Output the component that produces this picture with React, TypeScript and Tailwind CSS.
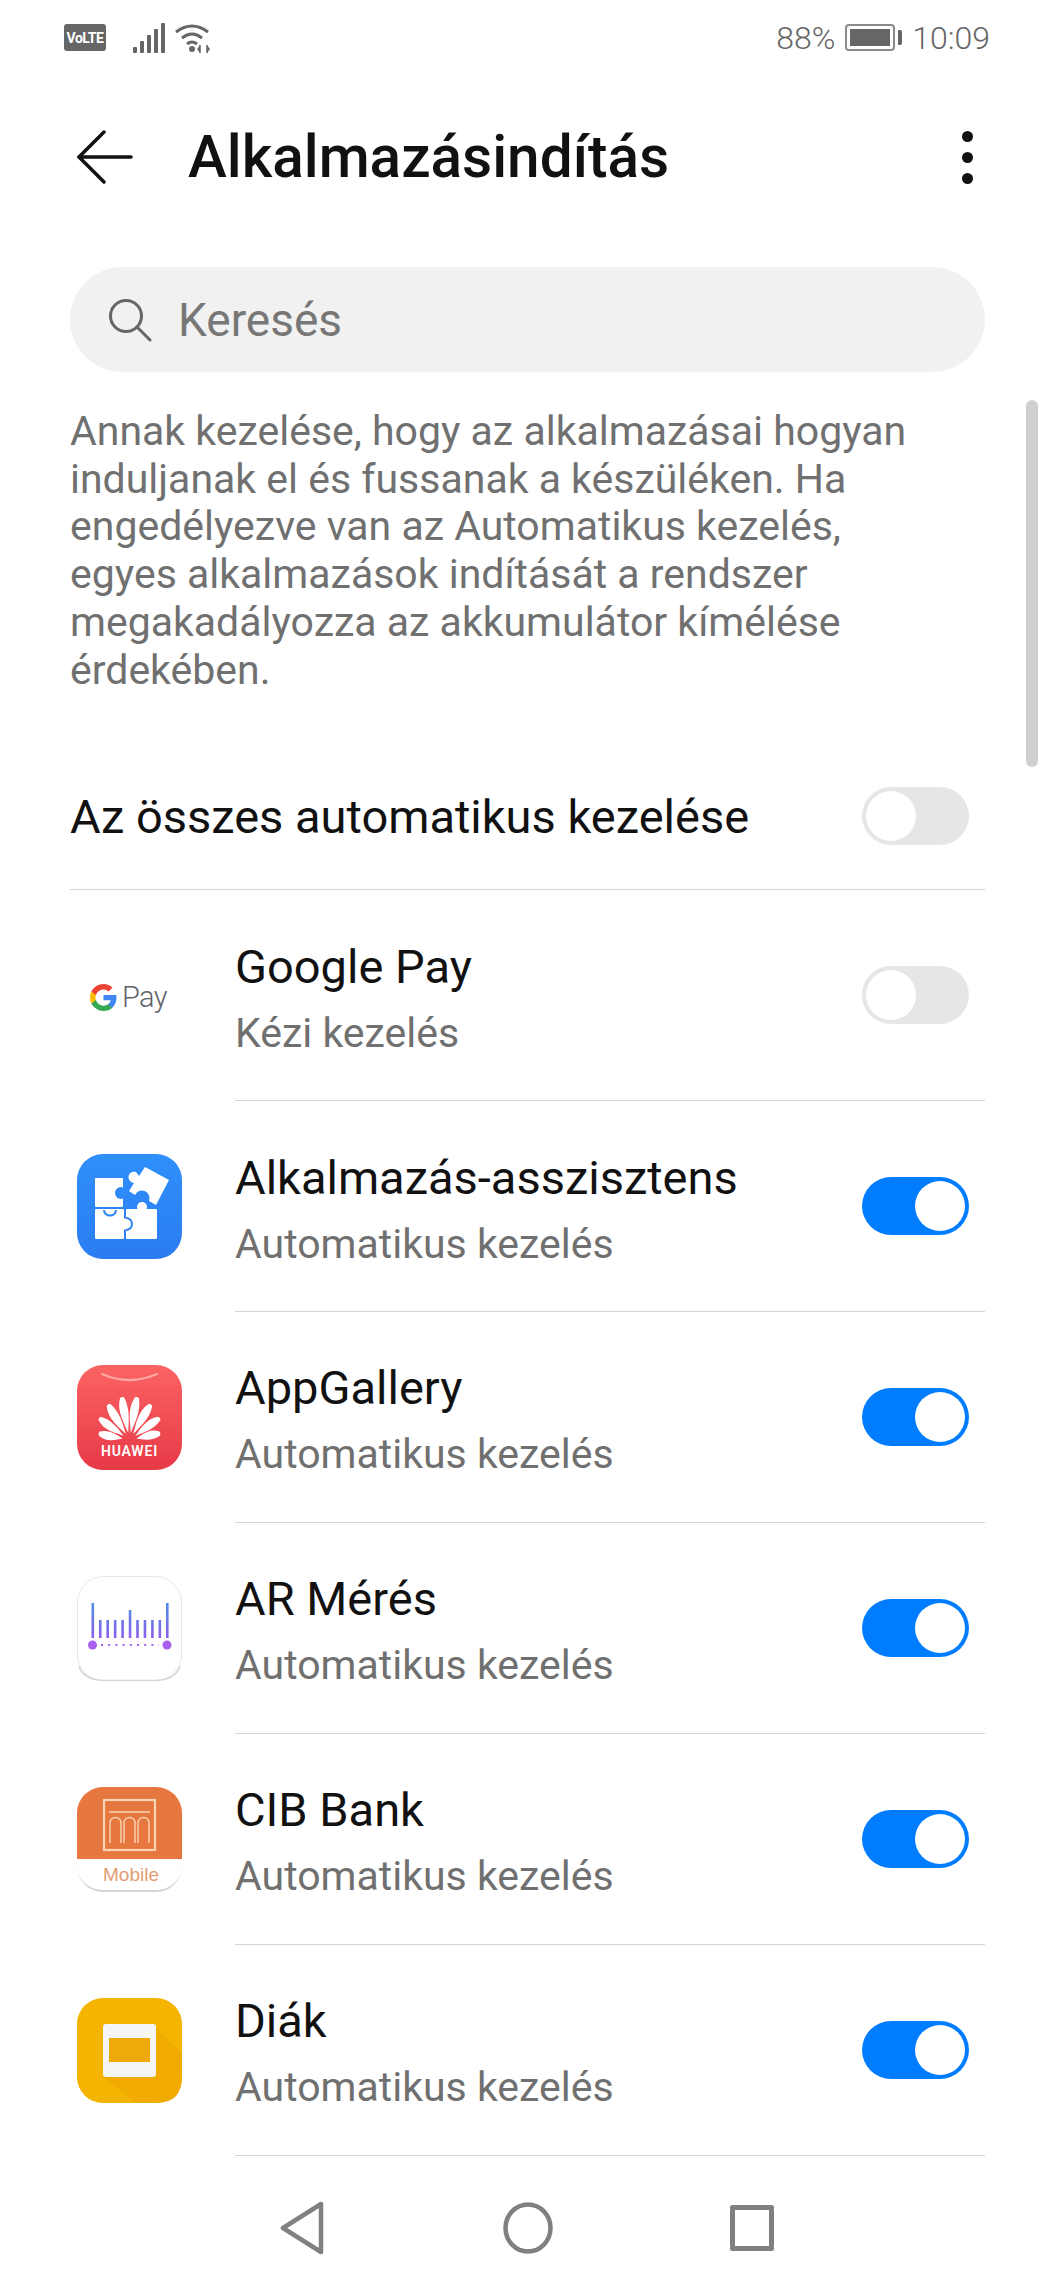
import type { ReactNode } from 'react';

function Toggle({ on }: { on: boolean }) {
  return (
    <div
      className={`flex h-[58px] w-[107px] flex-none items-center rounded-full p-[4px] ${
        on ? 'justify-end bg-[#007dff]' : 'justify-start bg-[#e6e6e6]'
      }`}
    >
      <div className="h-[50px] w-[50px] rounded-full bg-white" />
    </div>
  );
}

function GPayIcon() {
  return (
    <div className="flex items-center gap-[5px] pl-[13px] pt-[3px]">
      <svg width="27" height="27" viewBox="1 1 22 22" className="flex-none">
        <path fill="#4285F4" d="M22.56 12.25c0-.78-.07-1.53-.2-2.25H12v4.26h5.92c-.26 1.37-1.04 2.53-2.21 3.31v2.77h3.57c2.08-1.92 3.28-4.74 3.28-8.09z" />
        <path fill="#34A853" d="M12 23c2.97 0 5.46-.98 7.28-2.66l-3.57-2.77c-.98.66-2.23 1.06-3.71 1.06-2.86 0-5.29-1.93-6.16-4.53H2.18v2.84C3.99 20.53 7.7 23 12 23z" />
        <path fill="#FBBC05" d="M5.84 14.09c-.22-.66-.35-1.36-.35-2.09s.13-1.43.35-2.09V7.07H2.18C1.43 8.55 1 10.22 1 12s.43 3.45 1.18 4.93l2.85-2.22.81-.62z" />
        <path fill="#EA4335" d="M12 5.38c1.62 0 3.06.56 4.21 1.64l3.15-3.15C17.45 2.09 14.97 1 12 1 7.7 1 3.99 3.47 2.18 7.07l3.66 2.84c.87-2.6 3.3-4.53 6.16-4.53z" />
      </svg>
      <span className="text-[29px] leading-none font-light tracking-[-0.6px] text-[#5f6368]">Pay</span>
    </div>
  );
}

function PuzzleIcon() {
  return (
    <svg width="105" height="105" viewBox="0 0 105 105">
      <defs>
        <linearGradient id="puzzle" x1="0" y1="0" x2="0" y2="1">
          <stop offset="0" stopColor="#2f90fb" />
          <stop offset="1" stopColor="#2b7cf0" />
        </linearGradient>
      </defs>
      <rect width="105" height="105" rx="26" fill="url(#puzzle)" />
      <g fill="#fff">
        <rect x="18" y="24" width="28" height="29" rx="1" />
        <rect x="18" y="55" width="29" height="30" rx="1" />
        <rect x="49" y="55" width="31" height="30" rx="1" />
        <circle cx="65" cy="53" r="5" />
        <circle cx="50" cy="70" r="6" />
        <path d="M68 13 L92 26 L79 51 L72 47 C75 38 63 32 58 41 L52 37 L57 29 C49 28 50 16 59 18 L62 22 Z" />
      </g>
      <circle cx="44" cy="39" r="6" fill="#2e8af8" />
      <path d="M27 56 a6 5.5 0 0 0 12 0" fill="none" stroke="#2e84f5" strokeWidth="2" />
      <path d="M49 64 a6 6 0 0 1 0 12" fill="none" stroke="#2e84f5" strokeWidth="2" />
    </svg>
  );
}

function HuaweiIcon() {
  const petals = [
    { a: -78, l: 31 },
    { a: -54, l: 37 },
    { a: -31, l: 41 },
    { a: -10, l: 43 },
    { a: 10, l: 43 },
    { a: 31, l: 41 },
    { a: 54, l: 37 },
    { a: 78, l: 31 },
  ];
  return (
    <div className="relative h-[105px] w-[105px]">
      <svg width="105" height="105" viewBox="0 0 105 105" className="absolute inset-0">
        <defs>
          <linearGradient id="huawei" x1="0" y1="0" x2="0" y2="1">
            <stop offset="0" stopColor="#fb6363" />
            <stop offset="1" stopColor="#e73a47" />
          </linearGradient>
        </defs>
        <rect width="105" height="105" rx="26" fill="url(#huawei)" />
        <path d="M25 9 Q52 21 80 9" fill="none" stroke="#ffa8a3" strokeWidth="2.4" strokeLinecap="round" />
        <g fill="#fff">
          {petals.map((p) => (
            <path
              key={p.a}
              d={`M0 -7 C-2 ${-p.l * 0.4} -8 ${-p.l * 0.7} -2 ${-p.l} Q0 ${-p.l - 1} 2 ${-p.l} C6.5 ${-p.l * 0.7} 2 ${-p.l * 0.4} 0 -7 Z`}
              transform={`translate(52.5 75) rotate(${p.a})`}
            />
          ))}
        </g>
      </svg>
      <span className="absolute inset-x-0 top-[79px] text-center text-[14px] leading-none font-semibold tracking-[0.8px] text-white">
        HUAWEI
      </span>
    </div>
  );
}

function ArIcon() {
  const bars = [27, 44, 44, 44, 44, 34, 44, 44, 44, 44, 27];
  return (
    <svg width="105" height="105" viewBox="0 0 105 105">
      <defs>
        <linearGradient id="arbar" x1="0" y1="27" x2="0" y2="62" gradientUnits="userSpaceOnUse">
          <stop offset="0" stopColor="#4f8ee8" />
          <stop offset="1" stopColor="#8a5fe8" />
        </linearGradient>
      </defs>
      <rect x="0.5" y="0.5" width="104" height="104" rx="26" fill="#fff" stroke="#e8e8e8" />
      <path d="M2 90 Q6 104 28 104.5 H77 Q99 104 103 90" fill="none" stroke="#d6d6d6" strokeWidth="1.5" />
      {bars.map((top, i) => (
        <rect key={i} x={14.5 + i * 7.45} y={top} width="2.6" height={62 - top} fill="url(#arbar)" />
      ))}
      <circle cx="15.5" cy="69" r="4.5" fill="#a860ee" />
      <circle cx="90" cy="69" r="4.5" fill="#a860ee" />
      <line x1="24" y1="69" x2="82" y2="69" stroke="#a860ee" strokeWidth="2" strokeDasharray="2 5.2" />
    </svg>
  );
}

function CibIcon() {
  return (
    <div className="relative flex h-[105px] w-[105px] flex-col overflow-hidden rounded-[26px] border-b-2 border-[#d4d4d4] bg-white">
      <svg width="105" height="72" viewBox="0 0 105 72" className="flex-none">
        <rect width="105" height="72" fill="#e6783f" />
        <rect x="27" y="13" width="51" height="50" fill="none" stroke="#f8d4b4" strokeWidth="2.2" />
        <line x1="32" y1="25" x2="73" y2="25" stroke="#f8d4b4" strokeWidth="1.6" />
        <path d="M33 56 V36 a5.5 5.5 0 0 1 11 0 V56 M47 56 V36 a5.5 5.5 0 0 1 11 0 V56 M61 56 V36 a5.5 5.5 0 0 1 11 0 V56" fill="none" stroke="#f8d4b4" strokeWidth="1.4" />
      </svg>
      <span className="mt-[6px] pl-[3px] text-center font-['Liberation_Sans',sans-serif] text-[19px] leading-[20px] text-[#e39c73]">Mobile</span>
    </div>
  );
}

function DiakIcon() {
  return (
    <svg width="105" height="105" viewBox="0 0 105 105">
      <rect width="105" height="105" rx="26" fill="#f4b400" />
      <path d="M79 30 L105 56 V79 Q105 105 79 105 H60 L26 79 Z" fill="#f0aa00" />
      <rect x="26" y="26" width="53" height="53" rx="3" fill="#f5f5f5" />
      <rect x="32" y="40" width="41" height="24" fill="#efa90a" />
    </svg>
  );
}

const apps: { name: string; sub: string; on: boolean; icon: ReactNode }[] = [
  { name: 'Google Pay', sub: 'Kézi kezelés', on: false, icon: <GPayIcon /> },
  { name: 'Alkalmazás-asszisztens', sub: 'Automatikus kezelés', on: true, icon: <PuzzleIcon /> },
  { name: 'AppGallery', sub: 'Automatikus kezelés', on: true, icon: <HuaweiIcon /> },
  { name: 'AR Mérés', sub: 'Automatikus kezelés', on: true, icon: <ArIcon /> },
  { name: 'CIB Bank', sub: 'Automatikus kezelés', on: true, icon: <CibIcon /> },
  { name: 'Diák', sub: 'Automatikus kezelés', on: true, icon: <DiakIcon /> },
];

function StatusBar() {
  return (
    <div className="flex h-[75px] items-center justify-between pl-[64px] pr-[65px] text-[#666]">
      <div className="flex items-center">
        <div className="flex h-[27px] w-[42px] items-center justify-center rounded-[3px] bg-[#666] text-[14px] leading-none font-bold tracking-[-0.5px] text-white">
          VoLTE
        </div>
        <svg width="32" height="30" viewBox="0 0 32 30" className="ml-[27px]" fill="#666">
          <rect x="0" y="24" width="4" height="6" rx="1" />
          <rect x="7" y="18" width="4" height="12" rx="1" />
          <rect x="14" y="12" width="4" height="18" rx="1" />
          <rect x="21" y="6" width="4" height="24" rx="1" />
          <rect x="28" y="0" width="4" height="30" rx="1" />
        </svg>
        <svg width="36" height="30" viewBox="0 0 36 30" className="ml-[10px]" fill="none" stroke="#666" strokeWidth="3">
          <path d="M1 9 Q17 -3 33 9" />
          <path d="M7 15 Q17 7 27 15" />
          <path d="M12 21 Q17 17 22 21" />
          <circle cx="17" cy="26" r="3" fill="#666" stroke="none" />
          <path d="M25 22 v8 M32 22 v8" strokeWidth="1.5" />
          <path d="M22 26 l3 -4 v8 z M35 26 l-3 -4 v8 z" fill="#666" strokeWidth="0" />
        </svg>
      </div>
      <div className="flex items-center text-[32px] leading-none font-light">
        <span>88%</span>
        <div className="ml-[10px] flex h-[27px] w-[50px] items-center rounded-[4px] border-2 border-[#8a8a8a] p-[3px]">
          <div className="h-full w-[40px] bg-[#666]" />
        </div>
        <div className="ml-[3px] h-[15px] w-[4px] rounded-r-[2px] bg-[#666]" />
        <span className="ml-[10px]">10:09</span>
      </div>
    </div>
  );
}

export default function App() {
  return (
    <div className="relative flex h-[2286px] w-[1055px] flex-col overflow-hidden bg-white font-['Roboto',sans-serif] text-[#111]">
      <StatusBar />

      <div className="flex h-[164px] items-center pl-[77px] pr-[82px]">
        <svg width="56" height="54" viewBox="0 0 56 54" fill="none" stroke="#111" strokeWidth="3.5" strokeLinecap="round" strokeLinejoin="round" className="flex-none">
          <path d="M27 2 L2 27 L27 52" />
          <path d="M2 27 H54" />
        </svg>
        <h1 className="ml-[55px] flex-1 text-[58.5px] leading-none font-medium">Alkalmazásindítás</h1>
        <div className="flex flex-col gap-[10px]">
          <div className="h-[11px] w-[11px] rounded-full bg-[#111]" />
          <div className="h-[11px] w-[11px] rounded-full bg-[#111]" />
          <div className="h-[11px] w-[11px] rounded-full bg-[#111]" />
        </div>
      </div>

      <div className="mx-[70px] mt-[28px] flex h-[105px] flex-none items-center rounded-full bg-[#f1f1f1] pl-[38px] text-[#777]">
        <svg width="44" height="44" viewBox="0 0 44 44" fill="none" stroke="#666" strokeWidth="3" strokeLinecap="round" className="flex-none">
          <circle cx="18" cy="18" r="15.5" />
          <path d="M29 29 L42 42" />
        </svg>
        <span className="ml-[26px] text-[46px] leading-none">Keresés</span>
      </div>

      <p className="mx-[70px] mt-[36px] text-[41px] leading-[47.7px] text-[#707070]">
        Annak kezelése, hogy az alkalmazásai hogyan
        <br />
        induljanak el és fussanak a készüléken. Ha
        <br />
        engedélyezve van az Automatikus kezelés,
        <br />
        egyes alkalmazások indítását a rendszer
        <br />
        megakadályozza az akkumulátor kímélése
        <br />
        érdekében.
      </p>

      <div className="mx-[70px] mt-[52px] flex h-[144px] flex-none items-center justify-between border-b border-[#d4d4d4] pb-[3px] pr-[16px]">
        <span className="text-[47px] leading-none">Az összes automatikus kezelése</span>
        <Toggle on={false} />
      </div>

      <div className="ml-[70px] mr-[70px] flex flex-col">
        {apps.map((app) => (
          <div key={app.name} className="flex h-[210.9px] flex-none items-center">
            <div className="flex w-[165px] flex-none items-center pl-[7px]">{app.icon}</div>
            <div className="flex h-full flex-1 items-center justify-between border-b border-[#d4d4d4] pr-[16px]">
              <div className="flex flex-col pt-[4px]">
                <span className="text-[47px] leading-[60px]">{app.name}</span>
                <span className="mt-[11px] text-[41px] leading-[50px] text-[#707070]">{app.sub}</span>
              </div>
              <Toggle on={app.on} />
            </div>
          </div>
        ))}
      </div>

      <div className="flex flex-1 items-center pt-[14px]">
        <div className="flex w-full items-center">
          <svg width="44" height="54" viewBox="0 0 44 54" fill="none" stroke="#808080" strokeWidth="4.5" strokeLinejoin="round" className="ml-[280px] flex-none">
            <path d="M3 27 L41 3 V51 Z" />
          </svg>
          <svg width="50" height="52" viewBox="0 0 50 52" fill="none" stroke="#808080" strokeWidth="4.5" className="ml-[179px] flex-none">
            <ellipse cx="25" cy="26" rx="22.5" ry="23.5" />
          </svg>
          <svg width="44" height="46" viewBox="0 0 44 46" fill="none" stroke="#808080" strokeWidth="5" strokeLinejoin="round" className="ml-[177px] flex-none">
            <rect x="2.5" y="2.5" width="39" height="41" />
          </svg>
        </div>
      </div>

      <div className="absolute left-[1026px] top-[400px] h-[367px] w-[12px] rounded-full bg-[#cfcfcf]" />
    </div>
  );
}
